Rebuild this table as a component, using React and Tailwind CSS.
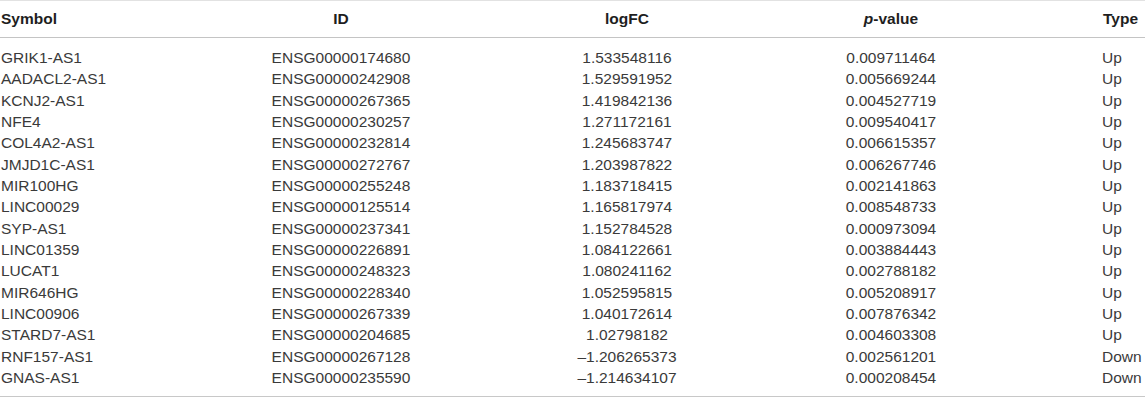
import React from "react";

const rows = [
  ["GRIK1-AS1", "ENSG00000174680", "1.533548116", "0.009711464", "Up"],
  ["AADACL2-AS1", "ENSG00000242908", "1.529591952", "0.005669244", "Up"],
  ["KCNJ2-AS1", "ENSG00000267365", "1.419842136", "0.004527719", "Up"],
  ["NFE4", "ENSG00000230257", "1.271172161", "0.009540417", "Up"],
  ["COL4A2-AS1", "ENSG00000232814", "1.245683747", "0.006615357", "Up"],
  ["JMJD1C-AS1", "ENSG00000272767", "1.203987822", "0.006267746", "Up"],
  ["MIR100HG", "ENSG00000255248", "1.183718415", "0.002141863", "Up"],
  ["LINC00029", "ENSG00000125514", "1.165817974", "0.008548733", "Up"],
  ["SYP-AS1", "ENSG00000237341", "1.152784528", "0.000973094", "Up"],
  ["LINC01359", "ENSG00000226891", "1.084122661", "0.003884443", "Up"],
  ["LUCAT1", "ENSG00000248323", "1.080241162", "0.002788182", "Up"],
  ["MIR646HG", "ENSG00000228340", "1.052595815", "0.005208917", "Up"],
  ["LINC00906", "ENSG00000267339", "1.040172614", "0.007876342", "Up"],
  ["STARD7-AS1", "ENSG00000204685", "1.02798182", "0.004603308", "Up"],
  ["RNF157-AS1", "ENSG00000267128", "\u20131.206265373", "0.002561201", "Down"],
  ["GNAS-AS1", "ENSG00000235590", "\u20131.214634107", "0.000208454", "Down"],
];

const grid = "grid grid-cols-[200px_282px_290px_238px_92px_1fr]";

export default function App() {
  return (
    <div
      className="w-[1145px] h-[399px] bg-white text-[15.5px] text-[#3a3a3a]"
      style={{ fontFamily: '"Liberation Sans", Arial, sans-serif' }}
    >
      <div className="border-t border-[#e2e2e2]" />
      <div className={`${grid} h-[37px] items-center font-bold text-[#1e1e1e] border-b border-[#c4c4c4]`}>
        <div className="pl-[1px]">Symbol</div>
        <div className="text-center">ID</div>
        <div className="text-center">logFC</div>
        <div className="text-center">
          <span className="italic">p</span>-value
        </div>
        <div />
        <div className="pl-[1px]">Type</div>
      </div>
      <div className="pt-[9px] pb-[8px] border-b border-[#c8c8c8]">
        {rows.map((r) => (
          <div key={r[0]} className={`${grid} h-[21.33px] items-center leading-none`}>
            <div className="pl-[1px]">{r[0]}</div>
            <div className="text-center">{r[1]}</div>
            <div className="text-center">{r[2]}</div>
            <div className="text-center">{r[3]}</div>
            <div />
            <div>{r[4]}</div>
          </div>
        ))}
      </div>
    </div>
  );
}
